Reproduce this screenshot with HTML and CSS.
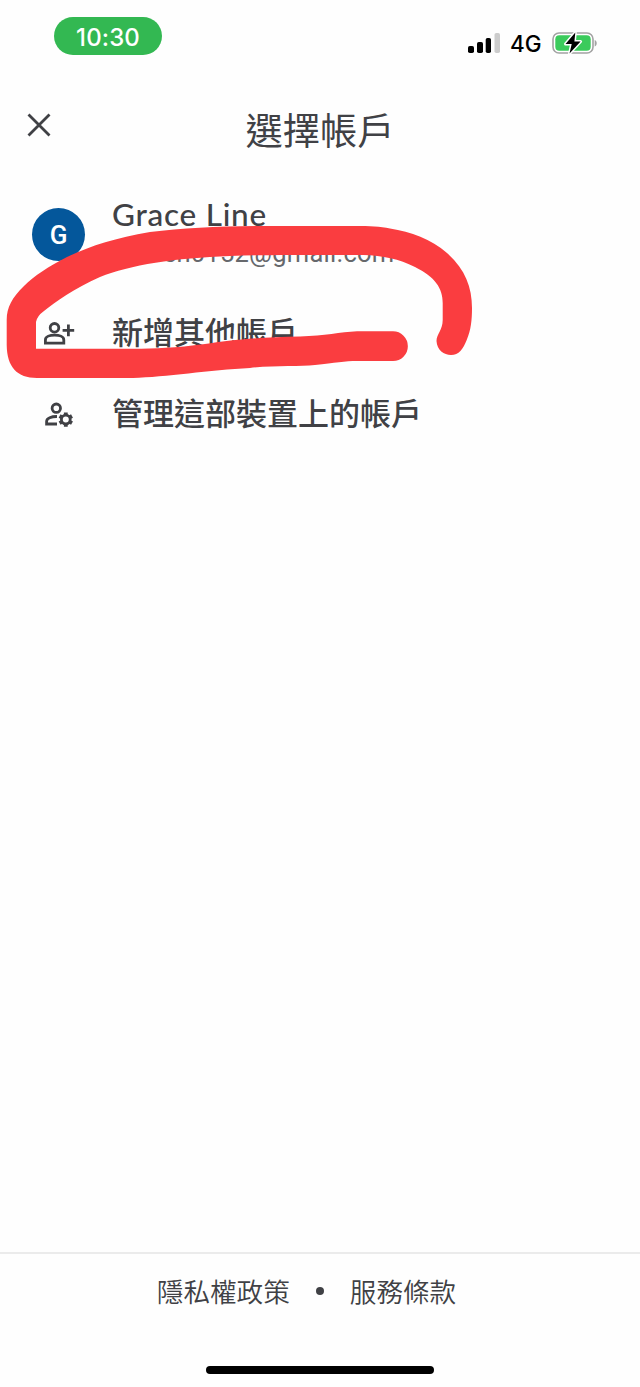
FILE: index.html
```html
<!DOCTYPE html>
<html lang="zh-Hant">
<head>
<meta charset="utf-8">
<title>選擇帳戶</title>
<link rel="stylesheet" href="styles.css">
</head>
<body>
<div class="screen">
  <div class="status">
    <div class="time">10:30</div>
    <div class="indicators">
      <svg class="signal" width="32" height="22" viewBox="0 0 32 22">
        <rect x="0" y="13" width="6" height="7" rx="1.8"/>
        <rect x="9" y="9" width="6" height="11" rx="1.8"/>
        <rect x="17.7" y="5" width="5.3" height="15" rx="1.8"/>
        <rect x="26.5" y="0" width="5.5" height="20" rx="1.8" fill="#cccccc"/>
      </svg>
      <span class="network">4G</span>
      <svg class="battery" width="46" height="26" viewBox="0 0 46 26">
        <rect x="1" y="3" width="40" height="20" rx="6" fill="#fff" stroke="#a3a3a3" stroke-width="1.6"/>
        <rect x="3.3" y="5.2" width="35.4" height="15.6" rx="4" fill="#3bcb5c"/>
        <path d="M42.7 10v6.500c2.700-.7 2.700-5.800 0-6.500z" fill="#a3a3a3"/>
        <path d="M23.300 2.500 13.500 14h6.200L17.500 23.500 28.600 11.500h-6.200z" fill="#000" stroke="#fff" stroke-width="3" stroke-linejoin="round" paint-order="stroke"/>
      </svg>
    </div>
  </div>
  <header class="header">
    <svg class="close" width="24" height="24" viewBox="0 0 24 24"><path d="M1.500 1.500 22.500 22.500M22.500 1.500 1.500 22.500"/></svg>
    <h1 class="title">選擇帳戶</h1>
  </header>
  <main class="accounts">
    <div class="row profile">
      <div class="avatar">G</div>
      <div class="identity">
        <div class="name">Grace Line</div>
        <div class="email">gracen0152@gmail.com</div>
      </div>
    </div>
    <div class="row action">
      <svg class="icon" width="34" height="30" viewBox="0 0 34 30">
        <circle cx="12.500" cy="9.800" r="4.300"/>
        <path d="M3.400 25.200v-3.300c0-6.300 18.400-6.300 18.400 0v3.300zM20.600 12.400h11.600M26.400 6.600v11.600"/>
      </svg>
      <span>新增其他帳戶</span>
    </div>
    <div class="row action">
      <svg class="icon" width="34" height="30" viewBox="0 0 34 30">
        <circle cx="14.300" cy="9.200" r="4.200"/>
        <path d="M15 25H4.600v-2.600c0-3 4.800-5 10.400-4.900"/>
        <circle cx="23.800" cy="20.600" r="4.400"/>
        <path d="M23.800 13.400v3M23.800 24.800v3M17.600 17l2.600 1.500M27.400 22.700l2.600 1.500M17.600 24.200l2.600-1.500M27.400 18.500l2.600-1.500" stroke-width="3.800"/>
      </svg>
      <span>管理這部裝置上的帳戶</span>
    </div>
  </main>
  <footer class="footer">
    <span>隱私權政策</span><i class="dot"></i><span>服務條款</span>
  </footer>
  <div class="home"></div>
  <svg class="marker" width="640" height="480" viewBox="0 0 640 480">
    <path d="M6.700 320V345C7 367 17 378 37 378H133C165 377 210 370 250 368C275 365 300 367 315 365C335 363 345 361 357 361H393A14.700 14.700 0 0 0 393 331.300H357C340 332 325 336 300 336.500C260 337 230 340 205 344C175 348 155 348.700 133 348.700H36V322Q37 316 44 311C55 302 75 288 100 277C130 265 175 258 230 256C270 254.500 320 255 363 255C383 255.500 399 259 415 267C435 277 442.700 288 442.700 303V320C442.700 330 436.500 334 436.500 341C437 350 444 355 451 355C459 355 463 349 466.700 340C471 330 472 320 472 308C472 287 465 269 447 253C431 239 411 232 390 228.500C380 226.500 370 226 355 226H263C220 226 183 228 150 232C115 238 90 246 67 257C49 266 34 276 24 286C12 298 6.700 307 6.700 320Z"/>
  </svg>
</div>
</body>
</html>
```
FILE: styles.css
```css
body {
  margin: 0;
  background: #fefefe;
  color: #404145;
  font-family: Roboto, "Noto Sans CJK TC", sans-serif;
}
.screen {
  position: relative;
  display: flex;
  flex-direction: column;
  height: 1387px;
  overflow: hidden;
  white-space: nowrap;
}
.status {
  display: flex;
  justify-content: space-between;
  align-items: flex-start;
  height: 82px;
  padding: 17px 42px 0 54px;
  box-sizing: border-box;
}
.time {
  width: 108px;
  height: 38px;
  border-radius: 19px;
  background: #33b852;
  color: #fff;
  font: 500 24px/41px Inter, sans-serif;
  letter-spacing: 0.1px;
  text-align: center;
}
.indicators {
  display: flex;
  align-items: center;
  height: 26px;
  padding-top: 13px;
  color: #000;
}
.signal {
  padding-top: 1px;
}
.network {
  width: 31px;
  margin: 1px 11px 0 10px;
  font: 500 22.5px/26px Inter, sans-serif;
}
.battery {
  margin-top: -1px;
}
.header {
  display: grid;
  grid-template-columns: 1fr auto 1fr;
  align-items: center;
  height: 98px;
  padding: 0 27px;
}
.close {
  margin-bottom: 13px;
  fill: none;
  stroke: #404145;
  stroke-width: 2.8;
}
.title {
  margin: 0;
  padding-top: 1px;
  font-size: 37.3px;
  font-weight: 400;
  line-height: 50px;
}
.row {
  display: flex;
  box-sizing: border-box;
}
.profile {
  height: 112px;
  padding: 16px 32px 0;
}
.avatar {
  width: 53px;
  height: 53px;
  margin-top: 12px;
  border-radius: 50%;
  background: #04579b;
  color: #fff;
  font: 500 26px/55px Roboto, sans-serif;
  text-align: center;
}
.identity {
  padding-left: 27px;
}
.name {
  font: 500 31.5px/36px Lato, sans-serif;
  letter-spacing: 0.75px;
}
.email {
  padding-top: 2px;
  color: #66686c;
  font-size: 25.5px;
  line-height: 38px;
  letter-spacing: 0.25px;
}
.action {
  align-items: center;
  height: 81px;
  padding-left: 42px;
  font-size: 31px;
  font-weight: 500;
}
.action span {
  padding: 0 0 4px 36px;
}
.icon {
  fill: none;
  stroke: #404145;
  stroke-width: 2.8;
}
.footer {
  display: flex;
  justify-content: center;
  align-items: center;
  height: 72px;
  margin-top: auto;
  padding: 0 27px 4px 0;
  border-top: 2px solid #ebebeb;
  font-size: 26.6px;
  font-weight: 350;
}
.dot {
  width: 8px;
  height: 8px;
  margin: 2px 26px 0;
  border-radius: 50%;
  background: #404145;
}
.home {
  align-self: center;
  width: 228px;
  height: 8px;
  margin: 36px 0 13px;
  border-radius: 4px;
  background: #000;
}
.marker {
  position: absolute;
  top: 0;
  left: 0;
  fill: #fa3d40;
}
```
